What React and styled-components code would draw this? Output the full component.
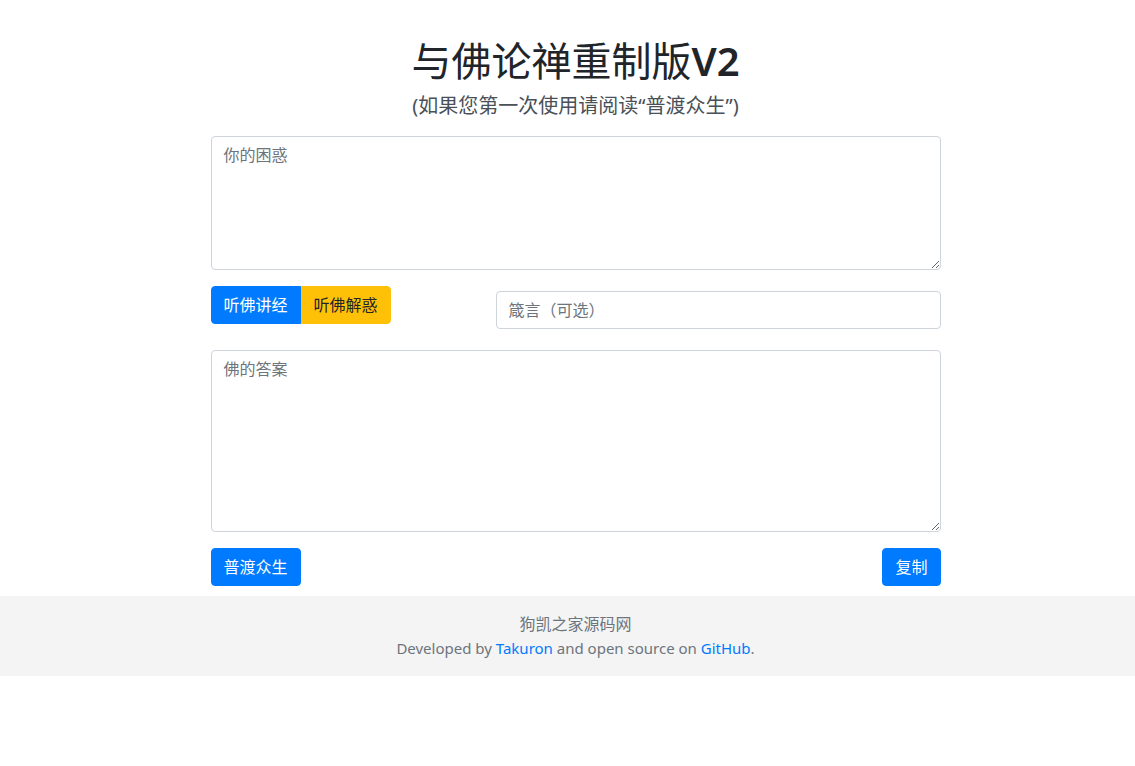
import React from 'react'
import styled, { createGlobalStyle } from 'styled-components'

const Global = createGlobalStyle`
  body {
    margin: 0;
    background: #ffffff;
    color: #212529;
    font-family: "Noto Sans", "Noto Sans CJK SC", sans-serif;
    font-size: 16px;
    line-height: 1.5;
  }
  * { box-sizing: border-box; }
`;

const Main = styled.main`
  width: 746px;
  margin: 0 auto;
  padding: 37px 0 0 16px;
`;

const Title = styled.h1`
  margin: 0;
  text-align: center;
  font-size: 40px;
  font-weight: 400;
  line-height: 1.2;
  color: #212529;
`;

const Strong = styled.span`
  font-weight: 600;
`;

const Hint = styled.p`
  margin: 6px 0 15px;
  text-align: center;
  font-size: 20px;
  line-height: 30px;
  color: #495057;
`;

const Area = styled.textarea`
  display: block;
  width: 100%;
  height: ${p => p.$h}px;
  padding: 6px 12px;
  border: 1px solid #ced4da;
  border-radius: 4px;
  font: inherit;
  color: #495057;
  resize: vertical;
  &::placeholder { color: #6c757d; }
`;

const ToolRow = styled.div`
  display: grid;
  grid-template-columns: 285px 1fr;
  align-items: start;
  margin: 16px 0 21px;
`;

const Group = styled.div`
  display: flex;
`;

const Btn = styled.button`
  height: 38px;
  padding: 6px 12px;
  border: 1px solid ${p => (p.$warn ? '#ffc107' : '#007bff')};
  background: ${p => (p.$warn ? '#ffc107' : '#007bff')};
  color: ${p => (p.$warn ? '#212529' : '#ffffff')};
  font: inherit;
  line-height: 24px;
  border-radius: 4px;
  cursor: pointer;
`;

const GroupBtn = styled(Btn)`
  border-radius: 0;
  &:first-child { border-radius: 4px 0 0 4px; }
  &:last-child { border-radius: 0 4px 4px 0; }
`;

const Input = styled.input`
  display: block;
  width: 100%;
  height: 38px;
  margin-top: 5px;
  padding: 6px 12px;
  border: 1px solid #ced4da;
  border-radius: 4px;
  font: inherit;
  &::placeholder { color: #6c757d; }
`;

const Actions = styled.div`
  display: flex;
  justify-content: space-between;
  margin: 16px 0 10px;
`;

const Footer = styled.footer`
  background: #f4f4f4;
  padding: 16px 0 16px 16px;
  text-align: center;
  color: #6c757d;
  font-size: 16px;
  line-height: 24px;
`;

const Line = styled.div`
  font-size: ${p => (p.$small ? '15px' : '16px')};
`;

const Link = styled.a`
  color: #007bff;
  text-decoration: none;
`;

export default function App() {
  return (
    <>
      <Global />
      <Main>
        <Title>与佛论禅重制版<Strong>V2</Strong></Title>
        <Hint>(如果您第一次使用请阅读“普渡众生”)</Hint>
        <Area $h={134} placeholder="你的困惑" />
        <ToolRow>
          <Group>
            <GroupBtn>听佛讲经</GroupBtn>
            <GroupBtn $warn>听佛解惑</GroupBtn>
          </Group>
          <Input placeholder="箴言（可选）" />
        </ToolRow>
        <Area $h={182} placeholder="佛的答案" />
        <Actions>
          <Btn>普渡众生</Btn>
          <Btn>复制</Btn>
        </Actions>
      </Main>
      <Footer>
        <Line>狗凯之家源码网</Line>
        <Line $small>
          Developed by <Link href="#">Takuron</Link> and open source on <Link href="#">GitHub</Link>.
        </Line>
      </Footer>
    </>
  )
}
